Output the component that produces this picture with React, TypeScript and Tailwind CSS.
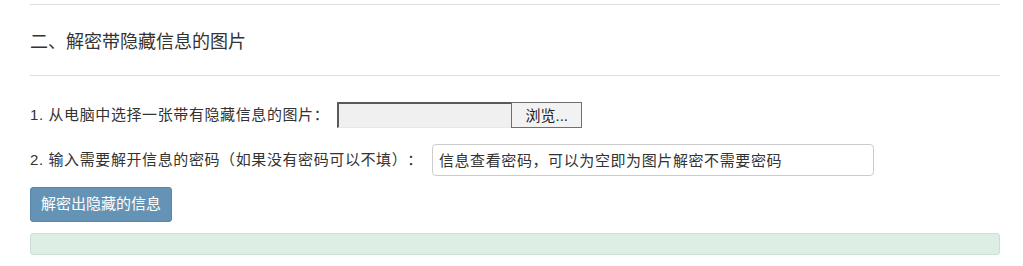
export default function App() {
  return (
    <div className="bg-white pl-[30px] pr-[23px] pt-[4px] font-['Liberation_Sans','Noto_Sans_CJK_SC',sans-serif] text-[15px] text-[#333] [text-spacing-trim:space-all]">
      <hr className="border-0 border-t border-[#dddddd]" />
      <h3 className="mt-[24px] mb-[20px] text-[18px] leading-[26px] font-normal">二、解密带隐藏信息的图片</h3>
      <hr className="border-0 border-t border-[#dddddd]" />

      {/* step 1: pick file */}
      <div className="mt-[26px] flex h-[26px] items-center">
        <span className="tracking-[0.6px]">1. 从电脑中选择一张带有隐藏信息的图片：</span>
        <div className="ml-[8px] flex h-[26px]">
          <div className="w-[174px] border-t-2 border-l-2 border-b border-r-0 border-t-[#5a5a5a] border-l-[#5a5a5a] border-b-[#e8e8e8] bg-[#f0f0f0]" />
          <button className="w-[71px] border border-[#6f6f6f] bg-[#f2f2f2] text-[15px] leading-none text-[#222]">浏览...</button>
        </div>
      </div>

      {/* step 2: password */}
      <div className="mt-[16px] flex h-[32px] items-center">
        <span className="tracking-[0.6px]">2. 输入需要解开信息的密码（如果没有密码可以不填）：</span>
        <input
          className="ml-[9px] h-[32px] w-[442px] rounded-[4px] border border-[#cccccc] px-[6px] text-[15px] tracking-[0.6px] text-[#333] outline-none placeholder:text-[#333]"
          placeholder="信息查看密码，可以为空即为图片解密不需要密码"
        />
      </div>

      <button className="mt-[11px] flex h-[35px] w-[142px] items-center justify-center rounded-[3px] border border-[#5686a8] bg-[#6593b5] text-[15px] text-white">
        解密出隐藏的信息
      </button>

      <div className="mt-[11px] h-[22px] rounded-[3px] border border-[#c7e0d1] bg-[#ddeee4]" />
    </div>
  );
}
